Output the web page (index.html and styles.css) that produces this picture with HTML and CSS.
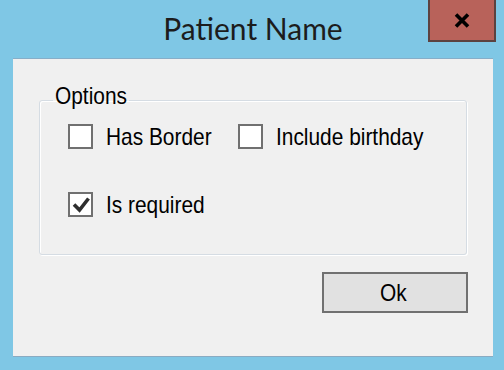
FILE: index.html
```html
<!DOCTYPE html>
<html lang="en">
<head>
<meta charset="utf-8">
<title>Patient Name</title>
<link rel="stylesheet" href="styles.css">
</head>
<body>
<div class="window">
  <header class="titlebar">
    <h1 class="title">Patient Name</h1>
    <button class="close" type="button" aria-label="Close">
      <svg width="16" height="15" viewBox="0 0 16 15" aria-hidden="true">
        <path d="M2 1.5 L14 13.5 M14 1.5 L2 13.5" stroke="#000" stroke-width="3.6" fill="none"/>
      </svg>
    </button>
  </header>
  <main class="client">
    <fieldset class="group">
      <legend class="legend"><span class="t">Options</span></legend>
      <div class="rows">
        <div class="row">
          <label class="check"><span class="box"></span><span class="t">Has Border</span></label>
          <label class="check"><span class="box"></span><span class="t">Include birthday</span></label>
        </div>
        <div class="row">
          <label class="check"><span class="box">
            <svg width="21" height="21" viewBox="0 0 21 21" aria-hidden="true">
              <path d="M4 10.5 L9.5 16 L18.5 4.5" stroke="#2e2e2e" stroke-width="3.6" fill="none"/>
            </svg>
          </span><span class="t">Is required</span></label>
        </div>
      </div>
    </fieldset>
    <div class="actions">
      <button class="btn" type="button"><span class="t tc">Ok</span></button>
    </div>
  </main>
</div>
</body>
</html>
```
FILE: styles.css
```css
html, body {
  margin: 0;
  padding: 0;
}

body {
  width: 504px;
  height: 370px;
  overflow: hidden;
  background: #7fc7e5;
  font-family: "Liberation Sans", Arial, sans-serif;
}

.titlebar {
  display: grid;
  grid-template-columns: 1fr auto 1fr;
  height: 58px;
  padding-left: 2px;
}

.title {
  grid-column: 2;
  margin: 0;
  padding-top: 10px;
  font: 400 30px/37px Lato, "Open Sans", sans-serif;
  color: #1c1c1c;
  white-space: nowrap;
}

.close {
  grid-column: 3;
  justify-self: end;
  align-self: start;
  margin: 0 8px 0 0;
  width: 68px;
  height: 42px;
  padding: 0;
  box-sizing: border-box;
  background: #b8625a;
  border: 2px solid #5c4240;
  border-top: 0;
  display: flex;
  align-items: center;
  justify-content: center;
}

.client {
  box-sizing: border-box;
  height: 299px;
  margin: 0 11px 0 13px;
  background: #f0f0f0;
  border-top: 1px solid #87aec8;
  border-bottom: 1px solid #8aabc2;
  display: flex;
  flex-direction: column;
}

.group {
  margin: 25px 26px 0 26px;
  padding: 0;
  min-width: 0;
  border: 1px solid #d5dce3;
  border-radius: 3px;
  box-shadow: inset 1px 1px 0 #fff, 1px 1px 0 #fff;
}

.legend {
  margin-left: 13px;
  padding: 0 2px 8px;
  font-size: 24px;
  line-height: 24px;
  color: #000;
}

.legend .t {
  margin-right: -10.7px;
}

.rows {
  display: flex;
  flex-direction: column;
  gap: 43px;
  padding: 8px 0 37px 28px;
}

.row {
  display: grid;
  grid-template-columns: 170px auto;
  height: 25px;
}

.check {
  display: flex;
  align-items: flex-start;
  gap: 13px;
  height: 25px;
  font-size: 24px;
  line-height: 25px;
  color: #000;
}

.box {
  flex: none;
  width: 25px;
  height: 25px;
  box-sizing: border-box;
  border: 2px solid #707070;
  background: #fff;
  display: flex;
}

.t {
  display: inline-block;
  white-space: nowrap;
  transform: scaleX(0.87);
  transform-origin: 0 50%;
}

.tc {
  transform-origin: 50% 50%;
}

.actions {
  display: flex;
  justify-content: flex-end;
  margin: 17px 25px 0 0;
}

.btn {
  width: 146px;
  height: 41px;
  box-sizing: border-box;
  margin: 0;
  padding: 1px 4px 0 0;
  border: 2px solid #707070;
  background: #e1e1e1;
  font: 24px/36px "Liberation Sans", Arial, sans-serif;
  color: #000;
}
```
